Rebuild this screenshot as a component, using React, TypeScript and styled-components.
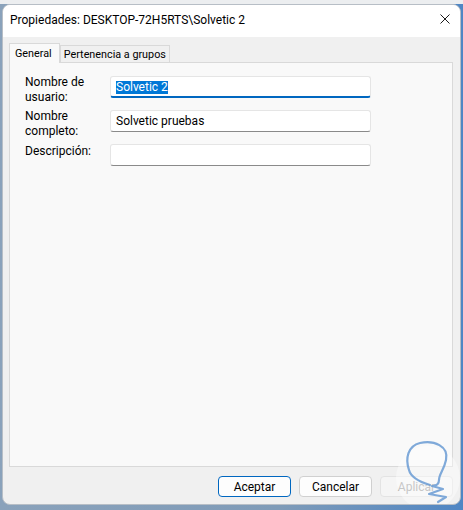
import React from 'react';
import styled, { createGlobalStyle } from 'styled-components';

const Global = createGlobalStyle`
  html, body { margin: 0; padding: 0; }
  body {
    width: 463px;
    height: 510px;
    overflow: hidden;
    background:
      linear-gradient(to bottom, #eceef0 0, #eceef0 4px, transparent 4px),
      linear-gradient(to right, #8aa2bb 0, #7f9bb8 60%, #4f86c4 100%);
    font-family: Roboto, "Liberation Sans", sans-serif;
    font-size: 12px;
    color: #000;
  }
`;

const Window = styled.div`
  position: relative;
  margin: 4px 0 0 2px;
  width: 459px;
  height: 501px;
  box-sizing: border-box;
  border: 1px solid #b7bec6;
  border-radius: 8px;
  background: #f0f0f0;
  display: flex;
  flex-direction: column;
  overflow: hidden;
`;

const TitleBar = styled.div`
  height: 32px;
  flex: none;
  background: #ffffff;
  display: flex;
  align-items: center;
  justify-content: space-between;
  padding: 0 10px 2px 7px;
  box-sizing: border-box;
`;

const Title = styled.span`
  font-size: 12px;
  color: #000;
`;

const CloseButton = styled.div`
  width: 10px;
  height: 10px;
  display: flex;
  margin-top: -2px;
`;

const Content = styled.div`
  flex: 1;
  display: flex;
  flex-direction: column;
  padding: 6px 7px 0 6px;
  min-height: 0;
`;

const TabRow = styled.div`
  display: flex;
  align-items: flex-end;
  height: 20px;
  margin-bottom: -1px;
  flex: none;
`;

const Tab = styled.div<{ $active?: boolean }>`
  position: relative;
  box-sizing: border-box;
  height: ${(p) => (p.$active ? 20 : 17)}px;
  margin-bottom: ${(p) => (p.$active ? 0 : 1)}px;
  border: 1px solid #d9d9d9;
  border-bottom: none;
  background: ${(p) => (p.$active ? '#f9f9f9' : '#f0f0f0')};
  z-index: ${(p) => (p.$active ? 1 : 0)};
  padding: ${(p) => (p.$active ? '2px 7px 0 5px' : '1px 3px 0 3px')};
  font-size: 10.8px;
  line-height: 15px;
  white-space: nowrap;
`;

const Panel = styled.div`
  flex: 1;
  border: 1px solid #d9d9d9;
  background: #f9f9f9;
  padding: 13px 15px;
  display: grid;
  grid-template-columns: 85px 261px;
  grid-auto-rows: 22px;
  row-gap: 12px;
  align-content: start;
`;

const Label = styled.div<{ $single?: boolean }>`
  font-size: 12px;
  line-height: 15px;
  margin-top: ${(p) => (p.$single ? 0 : -1)}px;
  color: #000;
  white-space: nowrap;
`;

const Field = styled.div<{ $focused?: boolean }>`
  height: 22px;
  box-sizing: border-box;
  border: 1px solid #e5e5e5;
  border-bottom: ${(p) => (p.$focused ? '2px solid #0067c0' : '1px solid #8a8a8a')};
  border-radius: 3px;
  background: #ffffff;
  padding: ${(p) => (p.$focused ? '1px 0 0 5px' : '0 0 0 5px')};
  display: flex;
  align-items: center;
  font-size: 12px;
  color: #000;
`;

const Selection = styled.span`
  background: #0078d7;
  color: #fff;
  line-height: 13px;
  height: 13px;
`;

const Footer = styled.div`
  flex: none;
  display: flex;
  justify-content: flex-end;
  gap: 8px;
  padding: 9px 0 7px 0;
`;

const Button = styled.div<{ $variant?: 'default' | 'primary' | 'disabled' }>`
  width: 73px;
  height: 21px;
  box-sizing: border-box;
  border-radius: 4px;
  display: flex;
  align-items: center;
  justify-content: center;
  font-size: 12px;
  border: 1px solid
    ${(p) => (p.$variant === 'primary' ? '#0067c0' : p.$variant === 'disabled' ? '#e3e3e3' : '#d0d0d0')};
  background: ${(p) => (p.$variant === 'disabled' ? '#f5f5f5' : '#fdfdfd')};
  color: ${(p) => (p.$variant === 'disabled' ? '#a2a2a2' : '#000')};
`;

const Watermark = styled.div`
  position: absolute;
  left: 393px;
  top: 441px;
  width: 64px;
  height: 64px;
  border-radius: 50%;
  background: rgba(255, 255, 255, 0.4);
  pointer-events: none;
`;

const WatermarkMark = styled.svg`
  position: absolute;
  left: 395px;
  top: 433px;
  width: 60px;
  height: 68px;
  pointer-events: none;
`;

export default function App() {
  return (
    <>
      <Global />
      <Window>
        <TitleBar>
          <Title>Propiedades: DESKTOP-72H5RTS\Solvetic 2</Title>
          <CloseButton>
            <svg width="10" height="10" viewBox="0 0 10 10">
              <path d="M0.5 0.5 L9.5 9.5 M9.5 0.5 L0.5 9.5" stroke="#1b1b1b" strokeWidth="1" fill="none" />
            </svg>
          </CloseButton>
        </TitleBar>
        <Content>
          <TabRow>
            <Tab $active>General</Tab>
            <Tab>Pertenencia a grupos</Tab>
          </TabRow>
          <Panel>
            <Label>
              Nombre de
              <br />
              usuario:
            </Label>
            <Field $focused>
              <Selection>Solvetic 2</Selection>
            </Field>
            <Label>
              Nombre
              <br />
              completo:
            </Label>
            <Field>Solvetic pruebas</Field>
            <Label $single>Descripción:</Label>
            <Field />
          </Panel>
          <Footer>
            <Button $variant="primary">Aceptar</Button>
            <Button>Cancelar</Button>
            <Button $variant="disabled">Aplicar</Button>
          </Footer>
        </Content>
        <Watermark />
        <WatermarkMark viewBox="398 438 60 68">
          <path
            d="M430 485 C420 482, 411 478, 409 470 C405 458, 408 446, 420 443 C434 440, 449 446, 446 460 C444 470, 439 474, 439 480 C439 484, 436 486, 432 486 L443 489 L429 494 L446 497 L438 502"
            stroke="#6a9bd3"
            strokeWidth="2.2"
            fill="none"
            strokeLinecap="round"
            strokeLinejoin="round"
            opacity="0.85"
          />
        </WatermarkMark>
      </Window>
    </>
  );
}
